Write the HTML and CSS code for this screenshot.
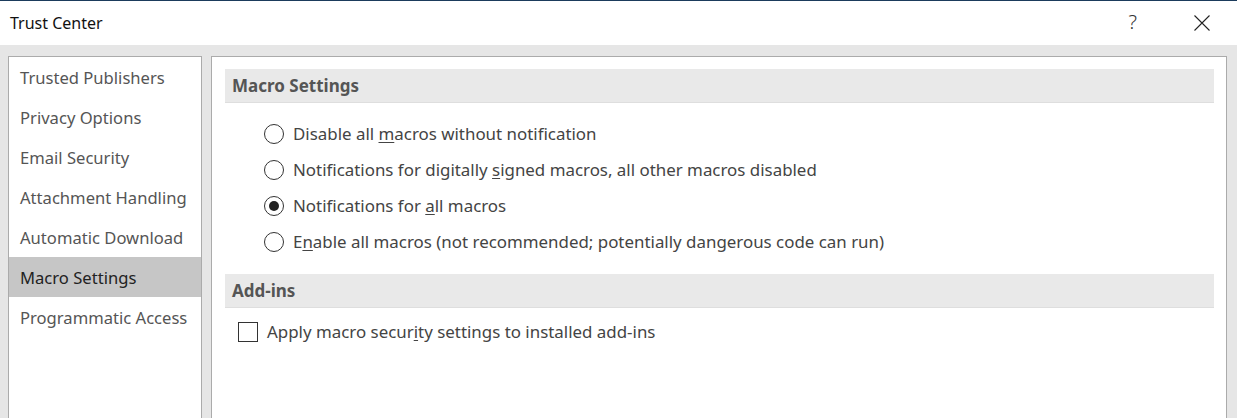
FILE: index.html
```html
<!DOCTYPE html>
<html>
<head>
<meta charset="utf-8">
<link rel="stylesheet" href="styles.css">
</head>
<body>
<div class="dialog">
  <div class="titlebar">
    <div class="title">Trust Center</div>
    <div class="controls">
      <span class="help">?</span>
      <svg class="close" width="16" height="16" viewBox="0 0 16 16"><path d="M0.5 0.5 L15.5 15.5 M15.5 0.5 L0.5 15.5" stroke="#222" stroke-width="1.1" fill="none"/></svg>
    </div>
  </div>
  <div class="body">
    <div class="nav">
      <div class="nav-item">Trusted Publishers</div>
      <div class="nav-item">Privacy Options</div>
      <div class="nav-item">Email Security</div>
      <div class="nav-item">Attachment Handling</div>
      <div class="nav-item">Automatic Download</div>
      <div class="nav-item selected">Macro Settings</div>
      <div class="nav-item">Programmatic Access</div>
    </div>
    <div class="panel">
      <div class="section-header">Macro Settings</div>
      <div class="radios">
        <div class="radio-row"><span class="radio"></span><span class="label">Disable all <u>m</u>acros without notification</span></div>
        <div class="radio-row"><span class="radio"></span><span class="label">Notifications for digitally <u>s</u>igned macros, all other macros disabled</span></div>
        <div class="radio-row"><span class="radio checked"></span><span class="label">Notifications for <u>a</u>ll macros</span></div>
        <div class="radio-row"><span class="radio"></span><span class="label">E<u>n</u>able all macros (not recommended; potentially dangerous code can run)</span></div>
      </div>
      <div class="section-header addins">Add-ins</div>
      <div class="check-row"><span class="checkbox"></span><span class="label">Apply macro secur<u>i</u>ty settings to installed add-ins</span></div>
    </div>
  </div>
</div>
</body>
</html>
```
FILE: styles.css
```css
html, body {
  margin: 0;
  padding: 0;
  height: 100%;
  overflow: hidden;
}
body {
  font-family: "Noto Sans", "Open Sans", sans-serif;
  font-size: 16px;
  color: #444;
  background: #e6e6e6;
}
.dialog {
  display: flex;
  flex-direction: column;
  height: 100%;
  border-top: 1px solid #1b3b5c;
}
.titlebar {
  height: 44px;
  background: #fff;
  display: flex;
  align-items: center;
  justify-content: space-between;
  flex-shrink: 0;
}
.title {
  padding-left: 10px;
  font-size: 16px;
  color: #111;
  margin-top: -1px;
}
.controls {
  display: flex;
  align-items: center;
  padding-right: 27px;
}
.help {
  font-family: "Noto Sans", sans-serif;
  font-size: 20px;
  line-height: 1;
  color: #333;
  margin-right: 57px;
  font-weight: 300;
  margin-top: -2px;
}
.close {
  display: block;
}
.body {
  flex: 1;
  display: flex;
  padding: 11px 10px 0 8px;
  gap: 9px;
  min-height: 0;
}
.nav {
  width: 192px;
  flex-shrink: 0;
  background: #fff;
  border: 1px solid #ababab;
  border-bottom: none;
}
.nav-item {
  height: 40px;
  display: flex;
  align-items: center;
  padding-left: 11px;
  color: #555;
  white-space: nowrap;
  font-size: 16.6px;
}
.nav-item.selected {
  background: #c6c6c6;
  color: #222;
}
.panel {
  flex: 1;
  background: #fff;
  border: 1px solid #ababab;
  border-bottom: none;
  padding: 12px 12px 0 13px;
}
.section-header {
  height: 33px;
  background: #e9e9e9;
  border-bottom: 1px solid #dedede;
  display: flex;
  align-items: center;
  padding-left: 7px;
  font-weight: bold;
  color: #555;
  font-size: 17px;
}
.radios {
  margin: 13px 0 14px 39px;
}
.radio-row, .check-row {
  height: 36px;
  display: flex;
  align-items: center;
}
.radio {
  width: 18px;
  height: 18px;
  border: 1px solid #333;
  border-radius: 50%;
  margin-right: 9px;
  flex-shrink: 0;
  display: flex;
  align-items: center;
  justify-content: center;
}
.radio.checked::after {
  content: "";
  width: 10px;
  height: 10px;
  border-radius: 50%;
  background: #222;
}
.check-row {
  margin: 6px 0 0 13px;
}
.checkbox {
  width: 18px;
  height: 18px;
  border: 1px solid #333;
  margin-right: 9px;
  flex-shrink: 0;
}
.label {
  white-space: nowrap;
  color: #444;
  font-size: 16.9px;
  margin-top: -1px;
}
u {
  text-underline-offset: 2px;
}
```
